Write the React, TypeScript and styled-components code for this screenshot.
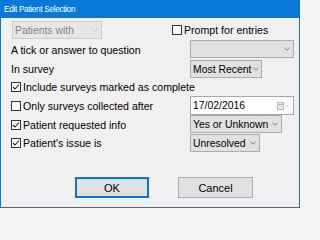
import React from "react";
import styled, { createGlobalStyle } from "styled-components";

const Global = createGlobalStyle`
  html, body { margin: 0; padding: 0; background: #f4f4f4; }
  body { font-family: "Liberation Sans", Arial, sans-serif; }
`;

const Window = styled.div`
  width: 300px;
  height: 208px;
  box-sizing: border-box;
  border: 1px solid #0a78d6;
  background: #f0f0f0;
  display: flex;
  flex-direction: column;
  font-family: "Liberation Sans", Arial, sans-serif;
  font-size: 10.6px;
  color: #000;
`;

const TitleBar = styled.div`
  height: 17px;
  background: #0a78d6;
  color: #fff;
  font-size: 8.2px;
  letter-spacing: -0.3px;
  display: flex;
  align-items: center;
  padding-left: 3px;
`;

const Body = styled.div`
  padding: 3px 0 0 10px;
  display: flex;
  flex-direction: column;
`;

const TopRow = styled.div`
  height: 19px;
  display: flex;
  align-items: flex-start;
  padding-left: 1px;
`;

const Form = styled.div`
  display: grid;
  grid-template-columns: 179px auto;
  grid-template-rows: 20px 18px 18px 19px 19px 18px;
  align-items: center;
`;

const Label = styled.div`
  white-space: nowrap;
  line-height: 12px;
`;

const Cell = styled.div`
  align-self: start;
  display: flex;
`;

const ComboBox = styled.div<{ $width: number; $disabled?: boolean }>`
  width: ${(p) => p.$width}px;
  height: 18px;
  box-sizing: border-box;
  border: 1px solid ${(p) => (p.$disabled ? "#cccccc" : "#adadad")};
  background: ${(p) => (p.$disabled ? "#e6e6e6" : "#e1e1e1")};
  color: ${(p) => (p.$disabled ? "#838383" : "#000")};
  display: flex;
  align-items: center;
  justify-content: space-between;
  gap: 2px;
  padding: 0 3px 0 2px;
  white-space: nowrap;
  font-size: 10.4px;
  svg { flex-shrink: 0; }
`;

const DateField = styled.div`
  width: 104px;
  height: 19px;
  box-sizing: border-box;
  border: 1px solid #a9a9a9;
  background: #fff;
  display: flex;
  align-items: center;
  justify-content: space-between;
  padding: 0 4px 0 2px;
  font-size: 10.4px;
`;

const CheckLabel = styled.label<{ $offset?: number }>`
  display: flex;
  align-items: center;
  gap: 2px;
  white-space: nowrap;
  margin-left: ${(p) => p.$offset ?? 0}px;
  line-height: 12px;
  height: 18px;
`;

const Box = styled.span`
  width: 10px;
  height: 10px;
  box-sizing: border-box;
  border: 1px solid #333;
  background: #fff;
  display: inline-flex;
  align-items: center;
  justify-content: center;
`;

const ButtonRow = styled.div`
  display: flex;
  gap: 29px;
  padding-left: 64px;
  margin-top: 25px;
`;

const Button = styled.div<{ $default?: boolean; $width: number }>`
  width: ${(p) => p.$width}px;
  height: 21px;
  box-sizing: border-box;
  background: #e1e1e1;
  border: 1px solid ${(p) => (p.$default ? "#0078d7" : "#adadad")};
  box-shadow: ${(p) => (p.$default ? "inset 0 0 0 1px #0078d7" : "none")};
  display: flex;
  align-items: center;
  justify-content: center;
  font-size: 11px;
`;

const Chevron = ({ color = "#707070" }: { color?: string }) => (
  <svg width="6" height="4" viewBox="0 0 6 4">
    <polyline points="0.5,0.8 3,3.2 5.5,0.8" fill="none" stroke={color} strokeWidth="0.9" />
  </svg>
);

const Check = ({ checked }: { checked?: boolean }) => (
  <Box>
    {checked && (
      <svg width="8" height="8" viewBox="0 0 8 8">
        <polyline points="1,4 3,6 7,1.5" fill="none" stroke="#222" strokeWidth="1.1" />
      </svg>
    )}
  </Box>
);

const CalendarIcon = () => (
  <svg width="12" height="8" viewBox="0 0 12 8">
    <rect x="0.5" y="0.5" width="6" height="7" fill="#e6e6e6" stroke="#bdbdbd" />
    <line x1="1" y1="2.5" x2="6" y2="2.5" stroke="#bdbdbd" />
    <polyline points="8.5,3 10,4.5 11.5,3" fill="none" stroke="#bdbdbd" strokeWidth="0.9" />
  </svg>
);

export default function App() {
  return (
    <>
      <Global />
      <Window>
        <TitleBar>Edit Patient Selection</TitleBar>
        <Body>
          <TopRow>
            <ComboBox $width={90} $disabled>
              <span>Patients with</span>
              <Chevron color="#b5b5b5" />
            </ComboBox>
            <CheckLabel $offset={70}>
              <Check />
              Prompt for entries
            </CheckLabel>
          </TopRow>
          <Form>
            <Label>A tick or answer to question</Label>
            <Cell>
              <ComboBox $width={104}>
                <span />
                <Chevron />
              </ComboBox>
            </Cell>

            <Label>In survey</Label>
            <Cell>
              <ComboBox $width={72}>
                <span>Most Recent</span>
                <Chevron />
              </ComboBox>
            </Cell>

            <CheckLabel>
              <Check checked />
              Include surveys marked as complete
            </CheckLabel>
            <span />

            <CheckLabel>
              <Check />
              Only surveys collected after
            </CheckLabel>
            <Cell>
              <DateField>
                <span>17/02/2016</span>
                <CalendarIcon />
              </DateField>
            </Cell>

            <CheckLabel>
              <Check checked />
              Patient requested info
            </CheckLabel>
            <Cell>
              <ComboBox $width={92}>
                <span>Yes or Unknown</span>
                <Chevron />
              </ComboBox>
            </Cell>

            <CheckLabel>
              <Check checked />
              Patient's issue is
            </CheckLabel>
            <Cell>
              <ComboBox $width={70}>
                <span>Unresolved</span>
                <Chevron />
              </ComboBox>
            </Cell>
          </Form>
          <ButtonRow>
            <Button $default $width={74}>OK</Button>
            <Button $width={75}>Cancel</Button>
          </ButtonRow>
        </Body>
      </Window>
    </>
  );
}
